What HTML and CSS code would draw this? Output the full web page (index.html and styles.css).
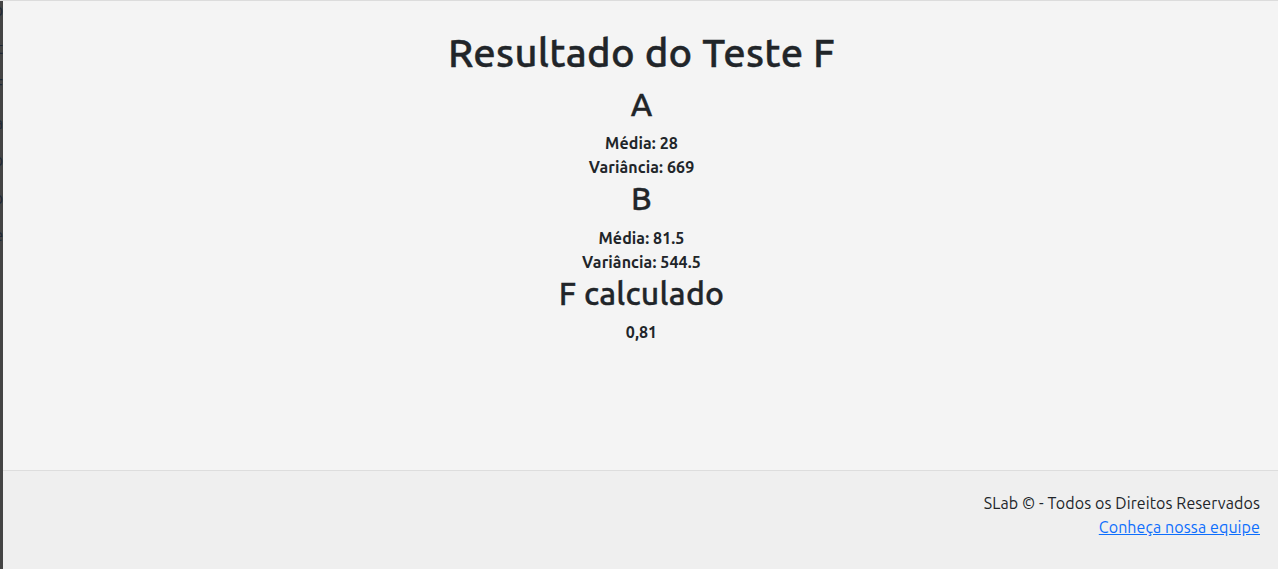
FILE: index.html
```html
<!DOCTYPE html>
<html lang="pt-BR">
<head>
<meta charset="utf-8">
<title>Resultado do Teste F</title>
<link rel="stylesheet" href="styles.css">
</head>
<body>
<div class="page">
  <aside class="sidebar">
    <div class="sidebar-inner">
      <span class="side-item">Início</span>
      <span class="side-item">Teste t</span>
      <span class="side-item">Teste F</span>
      <span class="side-item">Anova</span>
      <span class="side-item">Correlação</span>
      <span class="side-item">Regressão</span>
      <span class="side-item">Sobre</span>
    </div>
  </aside>
  <div class="content">
    <main class="main">
      <h1 class="title">Resultado do Teste F</h1>
      <h2 class="group">A</h2>
      <p class="stat">Média: 28</p>
      <p class="stat">Variância: 669</p>
      <h2 class="group">B</h2>
      <p class="stat">Média: 81.5</p>
      <p class="stat">Variância: 544.5</p>
      <h2 class="group">F calculado</h2>
      <p class="stat">0,81</p>
    </main>
    <footer class="footer">
      <p class="footer-line">SLab © - Todos os Direitos Reservados</p>
      <a class="footer-link" href="#">Conheça nossa equipe</a>
    </footer>
  </div>
</div>
</body>
</html>
```

FILE: styles.css
```css
html, body {
  margin: 0;
  padding: 0;
}
body {
  font-family: Ubuntu, "Noto Sans", "Open Sans", sans-serif;
  color: #212529;
  background: #f4f4f4;
  font-size: 16px;
  line-height: 1.5;
}
.page {
  display: flex;
  height: 569px;
  border-top: 1px solid #dcdcdc;
  box-sizing: border-box;
}
.sidebar {
  width: 3px;
  flex: none;
  background: #444444;
  overflow: hidden;
}
.sidebar-inner {
  width: 200px;
  margin-left: -197px;
  margin-top: -9px;
  display: flex;
  flex-direction: column;
  align-items: flex-end;
}
.side-item {
  display: block;
  font-size: 16px;
  line-height: 37.5px;
  color: #1d2735;
  white-space: nowrap;
}
.content {
  flex: 1;
  display: flex;
  flex-direction: column;
}
.main {
  flex: 1;
  display: flex;
  flex-direction: column;
  align-items: center;
  padding-top: 28px;
  padding-left: 2px;
}
.title {
  margin: 0 0 8px;
  font-size: 40px;
  font-weight: 500;
  line-height: 1.2;
  letter-spacing: 0.3px;
  -webkit-text-stroke: 0.4px #212529;
}
.group {
  margin: 0 0 8px;
  font-size: 32px;
  font-weight: 500;
  line-height: 1.2;
  letter-spacing: 0.2px;
  -webkit-text-stroke: 0.35px #212529;
}
.stat {
  margin: 0;
  font-weight: 700;
  font-size: 16px;
  line-height: 24px;
  letter-spacing: 0.1px;
}
.footer {
  flex: none;
  height: 99px;
  box-sizing: border-box;
  background: #efefef;
  border-top: 1px solid #dddddd;
  padding: 20px 18px 0 0;
  display: flex;
  flex-direction: column;
  align-items: flex-end;
}
.footer-line {
  margin: 0;
  line-height: 24px;
  letter-spacing: 0.1px;
}
.footer-link {
  color: #0d6efd;
  text-decoration: underline;
  line-height: 24px;
  letter-spacing: 0.1px;
}
```
